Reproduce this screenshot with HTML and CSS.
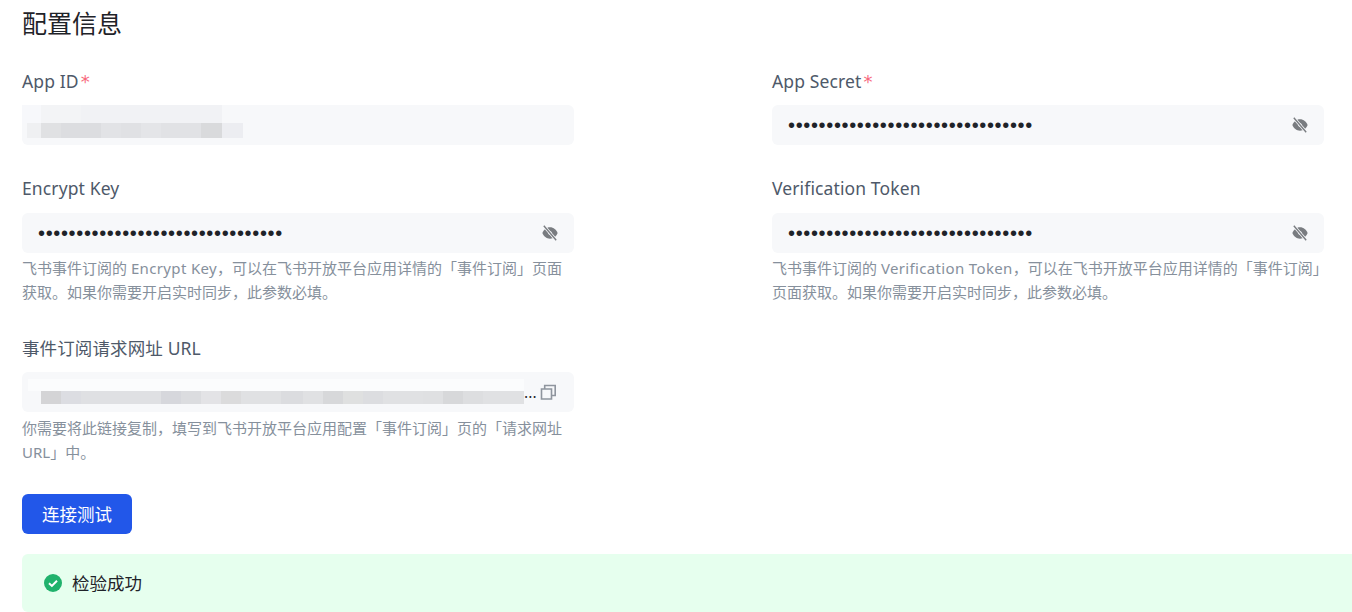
FILE: index.html
```html
<!DOCTYPE html>
<html lang="zh-CN">
<head>
<meta charset="utf-8">
<title>配置信息</title>
<link rel="stylesheet" href="styles.css">
</head>
<body>
<main class="page">
  <h2 class="title">配置信息</h2>
  <div class="grid">
    <div class="field field-a">
      <label class="label">App ID<span class="req">*</span></label>
      <div class="input input-flush"><div class="mosaic mosaic-id"></div></div>
    </div>
    <div class="field field-a">
      <label class="label">App Secret<span class="req">*</span></label>
      <div class="input"><span class="dots">••••••••••••••••••••••••••••••••</span>
        <svg class="eye" viewBox="0 0 16 16"><use href="#eye-off"/></svg></div>
    </div>
    <div class="field field-b">
      <label class="label">Encrypt Key</label>
      <div class="input"><span class="dots">••••••••••••••••••••••••••••••••</span>
        <svg class="eye" viewBox="0 0 16 16"><use href="#eye-off"/></svg></div>
      <p class="hint">飞书事件订阅的 <span class="latin">Encrypt Key</span>，可以在飞书开放平台应用详情的「事件订阅」页面获取。如果你需要开启实时同步，此参数必填。</p>
    </div>
    <div class="field field-b">
      <label class="label">Verification Token</label>
      <div class="input"><span class="dots">••••••••••••••••••••••••••••••••</span>
        <svg class="eye" viewBox="0 0 16 16"><use href="#eye-off"/></svg></div>
      <p class="hint">飞书事件订阅的 <span class="latin">Verification Token</span>，可以在飞书开放平台应用详情的「事件订阅」页面获取。如果你需要开启实时同步，此参数必填。</p>
    </div>
    <div class="field field-c">
      <label class="label">事件订阅请求网址 URL</label>
      <div class="input input-url"><div class="mosaic mosaic-url"></div><span class="ellipsis">...</span>
        <svg class="copy" viewBox="0 0 16 16"><path d="M4.700 4.700V1.500H15.200V11.500H12M1.500 5H11.500V15H1.500Z" fill="none" stroke="currentColor" stroke-width="1.600"/></svg></div>
      <p class="hint">你需要将此链接复制，填写到飞书开放平台应用配置「事件订阅」页的「请求网址 URL」中。</p>
    </div>
  </div>
  <button class="btn" type="button">连接测试</button>
  <div class="alert">
    <svg class="check" viewBox="0 0 18 18"><circle cx="9" cy="9" r="9" fill="#20b26c"/><path d="M5 9.200l2.900 2.700L13 6.700" fill="none" stroke="#fff" stroke-width="2"/></svg>
    <span class="alert-text">检验成功</span>
  </div>
</main>
<svg class="defs" aria-hidden="true"><defs>
  <symbol id="eye-off" viewBox="0 0 16 16">
    <path d="M8 2.300C4.400 2.300 1.600 4.800 .4 8c1.200 3.200 4 5.700 7.600 5.700s6.400-2.500 7.600-5.700C14.400 4.800 11.600 2.300 8 2.300z" fill="#797c80"/>
    <circle cx="8" cy="8" r="1.800" fill="#f7f8fa"/>
    <path d="M1.800 .8l12.400 14.400" stroke="#f7f8fa" stroke-width="3"/>
    <path d="M1.800 .8l12.400 14.400" stroke="#797c80" stroke-width="1.400"/>
  </symbol>
</defs></svg>
</body>
</html>
```
FILE: styles.css
```css
* { box-sizing: border-box; }
html, body { margin: 0; padding: 0; background: #fff; overflow: hidden; }
body {
  height: 612px;
  font-family: "Noto Sans", "Noto Sans CJK SC", sans-serif;
  color: #1f2329;
}
.page { padding-left: 22px; width: 1352px; }
.title {
  margin: 0;
  height: 49px;
  font-size: 25px;
  font-weight: 400;
  line-height: 46px;
  color: #1f2329;
}
.grid {
  display: grid;
  grid-template-columns: 552px 552px;
  column-gap: 198px;
  width: 1302px;
  margin-bottom: 30px;
}
.field { display: flex; flex-direction: column; padding-top: 21px; }
.field-a { height: 107px; }
.field-b { height: 160px; }
.label {
  display: block;
  flex: none;
  height: 35px;
  font-size: 17.500px;
  letter-spacing: .120px;
  line-height: 22px;
  color: #4e5969;
}
.field-b .label { height: 36px; }
.req {
  margin-left: 2px;
  font-family: "DejaVu Sans", sans-serif;
  font-size: 18px;
  color: #f7687c;
}
.input {
  flex: none;
  display: flex;
  align-items: center;
  height: 40px;
  padding: 0 16px;
  background: #f7f8fa;
  border-radius: 6px;
  color: #1f2329;
}
.input-flush { padding: 0; }
.dots {
  flex: 1;
  font-family: "Liberation Sans", sans-serif;
  font-size: 20px;
  letter-spacing: .650px;
  line-height: 40px;
  color: #1f2329;
}
.eye { width: 16px; height: 16px; }
.copy { width: 16px; height: 16px; color: #8f959e; }
.hint {
  margin: 3px 0 0;
  font-size: 15px;
  line-height: 24px;
  color: #86909c;
}
.latin { letter-spacing: .350px; }
.field-c .hint { margin-top: 4px; }
.mosaic { height: 40px; flex: none; }
.input-url { padding: 0 18px 0 0; }
.ellipsis { flex: 1; font-family: "Inter", sans-serif; font-size: 14.560px; line-height: 40px; padding-top: 2px; }
.mosaic-id {
  width: 221px;
  background:
    linear-gradient(to right, #f7f8fa 0 5px, #eff0f2 5px 19px, #e0e1e3 19px 39px, #dcdde0 39px 79px, #e2e3e6 79px 99px, #e0e1e4 99px 119px, #e4e5e8 119px 139px, #e1e2e5 139px 179px, #d9dadc 179px 200px, #ecedf1 200px 221px) 0 18px / 221px 15px no-repeat,
    linear-gradient(to right, #f7f8fb 0 19px, #f3f4f6 19px 59px, #f1f2f5 59px 200px, #f7f8fa 200px) 0 0 / 221px 18px no-repeat;
}
.mosaic-url {
  width: 502px;
  background:
    linear-gradient(to right, #d4d4d6 0 20px, #dcdde2 20px 40px, #dfe0e3 40px 120px, #d6d7dc 120px 140px, #dbdcdf 140px 160px, #e3e3e6 160px 180px, #dbdbdc 180px 200px, #e0e1e3 200px 240px, #dbdcdf 240px 262px, #e0e1e3 262px 282px, #d7d8da 282px 302px, #dfe0e0 302px 322px, #dcdde0 322px 342px, #e0e1e3 342px 382px, #dfe0e2 382px 402px, #d7d8da 402px 422px, #dddee0 422px 442px, #e0e1e3 442px 483px) 19px 19px / 483px 13px no-repeat,
    linear-gradient(#fbfcfd, #fbfcfd) 6px 7px / 496px 12px no-repeat;
}
.btn {
  display: block;
  width: 110px;
  height: 40px;
  margin: 0 0 20px;
  padding: 0 0 2px;
  border: 0;
  border-radius: 6px;
  background: #2257e9;
  color: #fff;
  font: inherit;
  font-size: 17.500px;
}
.alert {
  display: flex;
  align-items: center;
  gap: 10px;
  height: 58px;
  width: 1340px;
  padding-left: 22px;
  background: #e6ffee;
  border-radius: 6px;
  font-size: 17.500px;
  color: #1f2329;
}
.alert-text { padding-bottom: 2px; }
.check { width: 18px; height: 18px; }
.defs { position: absolute; width: 0; height: 0; }
```
